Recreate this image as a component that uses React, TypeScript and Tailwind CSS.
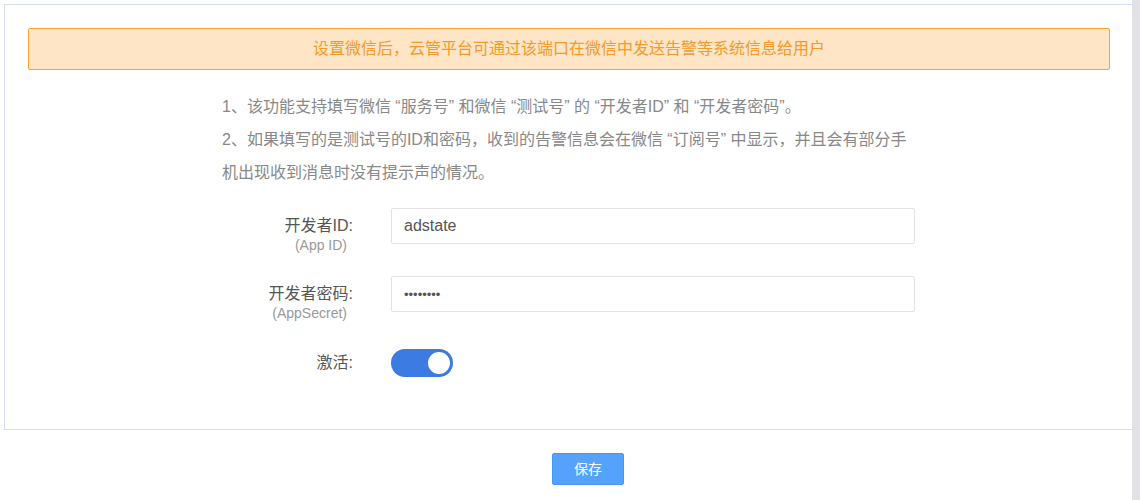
import { useState } from "react";

const font = { fontFamily: '"Liberation Sans", "Noto Sans CJK SC", sans-serif' };

const FormRow = ({ label, sub, children }: { label: string; sub?: string; children: React.ReactNode }) => (
  <div className="flex items-start">
    <div className="w-[131px] shrink-0 pt-[8px] text-right">
      <div className="text-[16px] leading-[20px] text-[#555]">{label}</div>
      {sub && <div className="pr-[6px] text-[14px] leading-[18px] text-[#999]">{sub}</div>}
    </div>
    <div className="ml-[38px]">{children}</div>
  </div>
);

const App = () => {
  const [active, setActive] = useState(true);

  return (
    <div className="flex h-[500px] w-full bg-white" style={font}>
      <div className="flex-1">
        {/* Panel */}
        <div className="ml-[4px] mt-[4px] h-[426px] border-b border-l border-t border-[#d3dff1] px-[23px] pr-[22px] pt-[23px]">
          <div className="flex h-[42px] items-center justify-center rounded-[2px] border border-[#f6a52c] bg-[#fde5c5] text-[16px] text-[#f29b2a]">
            设置微信后，云管平台可通过该端口在微信中发送告警等系统信息给用户
          </div>

          <div className="ml-[194px] w-[694px]">
            <div className="mt-[20px] text-[16px] leading-[33px] text-[#888]">
              <p>1、该功能支持填写微信 “服务号” 和微信 “测试号” 的 “开发者ID” 和 “开发者密码”。</p>
              <p>2、如果填写的是测试号的ID和密码，收到的告警信息会在微信 “订阅号” 中显示，并且会有部分手机出现收到消息时没有提示声的情况。</p>
            </div>

            <div className="mt-[19px] flex flex-col gap-[22px]">
              <FormRow label="开发者ID:" sub="(App ID)">
                <input
                  readOnly
                  value="adstate"
                  className="h-[36px] w-[524px] rounded-[2px] border border-[#e3e3e3] px-[12px] text-[16px] text-[#555] outline-none"
                />
              </FormRow>
              <FormRow label="开发者密码:" sub="(AppSecret)">
                <input
                  readOnly
                  type="password"
                  value="adstate1"
                  className="h-[36px] w-[524px] rounded-[2px] border border-[#e3e3e3] px-[12px] text-[13px] text-[#555] outline-none"
                />
              </FormRow>
            </div>

            <div className="mt-[27px] flex items-center">
              <div className="w-[131px] shrink-0 text-right text-[16px] leading-[20px] text-[#555]">激活:</div>
              <button
                onClick={() => setActive(!active)}
                className={`ml-[38px] flex h-[28px] w-[62px] items-center rounded-full px-[3px] ${
                  active ? "justify-end bg-[#3b7be2]" : "justify-start bg-[#ccc]"
                }`}
              >
                <span className="h-[22px] w-[22px] rounded-full bg-white" />
              </button>
            </div>
          </div>
        </div>

        {/* Save */}
        <div className="ml-[552px] mt-[23px]">
          <button className="h-[32px] w-[72px] rounded-[2px] border border-[#4b95f2] bg-[#55a2fd] text-[14px] text-white">
            保存
          </button>
        </div>
      </div>
      <div className="w-[8px] shrink-0 bg-[#e1e1e6]" />
    </div>
  );
};

export default App;
